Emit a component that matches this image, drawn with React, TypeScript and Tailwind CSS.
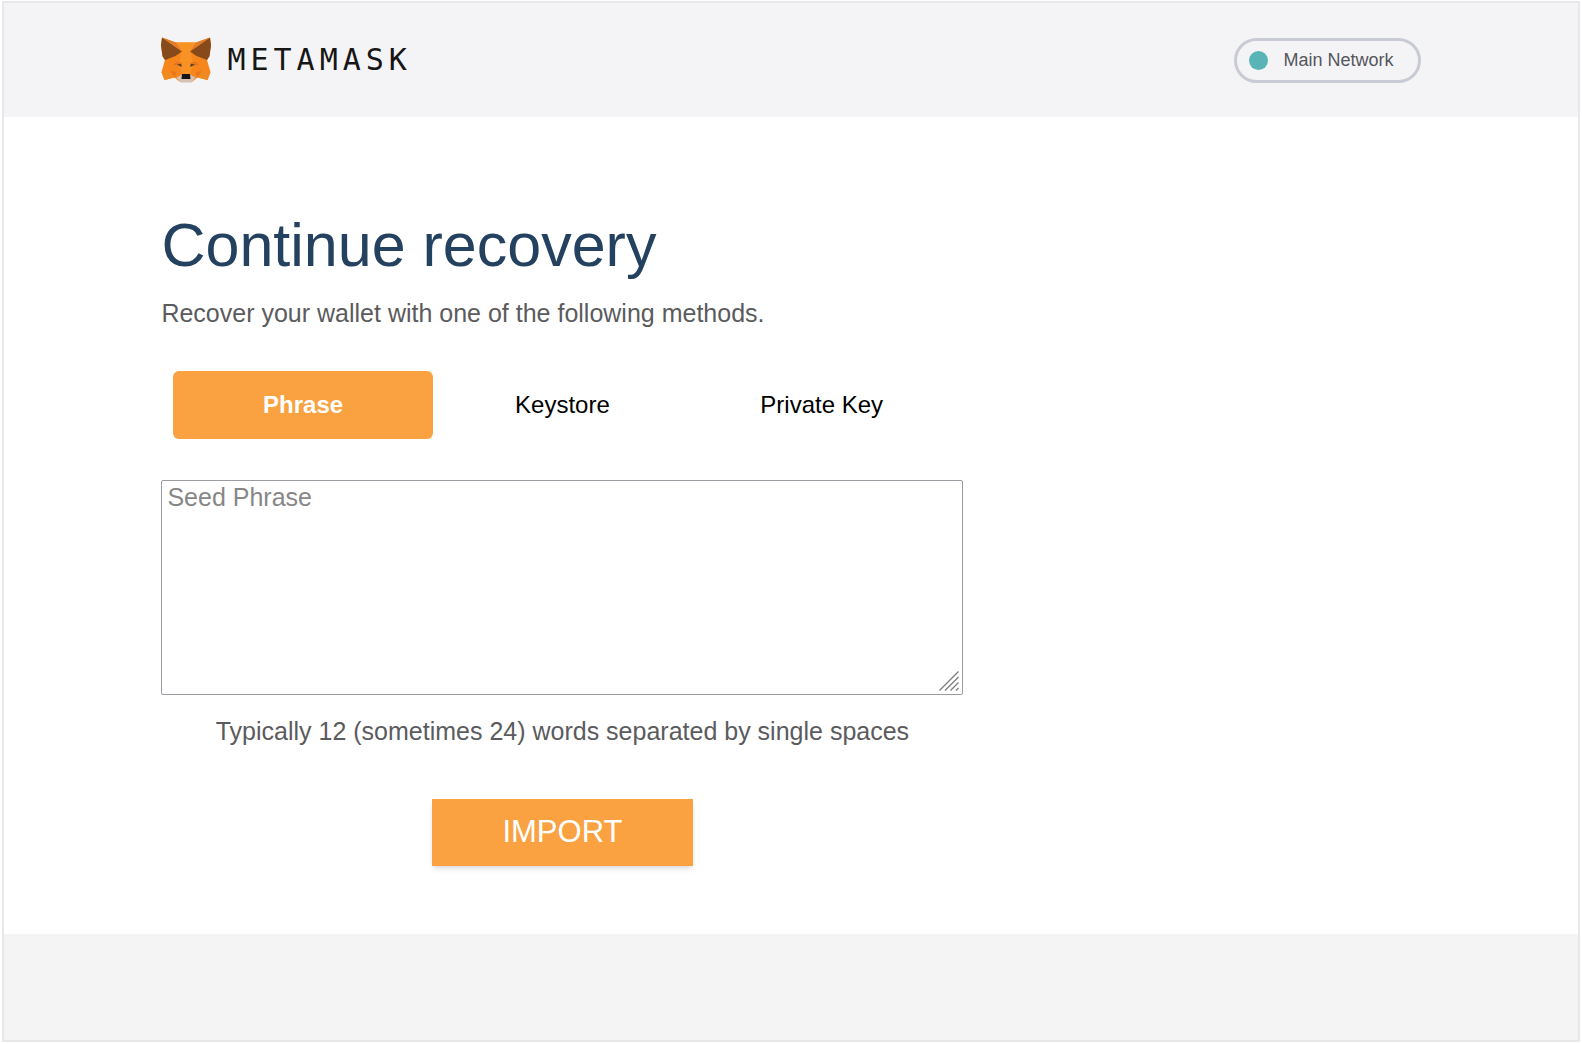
import React from "react";

const tabs = ["Phrase", "Keystore", "Private Key"];

const FoxLogo: React.FC = () => (
  <svg viewBox="0 0 50 46" className="w-[50px] h-[46px]" aria-hidden="true">
    {/* Head */}
    <path d="M15 5.5h20L49 .5l1 8-1.5 11L46 23l3.5 12-3 8-10-2.5-5 4h-13l-5-4-10 2.5-3-8L4 23 1.5 19.5 0 8.5l1-8z" fill="#f6851b" />
    <path d="M15 5.5h20l-5 9 2 14-3 9h-8l-3-9 2-14z" fill="#f89224" />
    {/* Ears */}
    <path d="M1 .5l20 14-6.5 4.5L4 23l-2.5-4L0 8.5z" fill="#874a1b" />
    <path d="M49 .5l-20 14 6.5 4.5L46 23l2.5-4L50 8.5z" fill="#874a1b" />
    <path d="M1 .5l14 5 6 9z" fill="#e07c2c" />
    <path d="M49 .5l-14 5-6 9z" fill="#e07c2c" />
    {/* Eyes */}
    <path d="M12 28l4-3.5 5 1.5v3z" fill="#e4761b" />
    <path d="M38 28l-4-3.5-5 1.5v3z" fill="#e4761b" />
    <path d="M16 27.5l4-.5.8 3z" fill="#4a3d30" />
    <path d="M34 27.5l-4-.5-.8 3z" fill="#4a3d30" />
    {/* Cheeks */}
    <path d="M9.5 34l6 1-2 5.5z" fill="#e4761b" />
    <path d="M40.5 34l-6 1 2 5.5z" fill="#e4761b" />
    <path d="M.5 35h9l4 5.5L3.500 43z" fill="#f08a20" />
    <path d="M49.5 35h-9l-4 5.5 10 2.500z" fill="#f08a20" />
    {/* Muzzle */}
    <path d="M15.5 40.5l5.500-3h8l5.500 3-4 5h-11z" fill="#d7c1b3" />
    <path d="M21 37h8l.5 5h-9z" fill="#161616" />
  </svg>
);

const Header: React.FC = () => (
  <header className="bg-[#f4f4f7] py-[34px]">
    <div className="w-4/5 mx-auto flex items-center justify-between">
      <a href="#" className="flex items-center gap-4">
        <FoxLogo />
        <span className="font-['DejaVu_Sans_Mono',monospace] text-[30px] leading-10 tracking-[5px] text-[#161616]">
          METAMASK
        </span>
      </a>
      <button
        type="button"
        className="flex items-center gap-4 h-[45px] pl-3 pr-6 rounded-full border-[3px] border-[#c8cbd3] text-lg text-[#55565b]">
        <span className="size-[19px] rounded-full bg-[#5ab4b6]" />
        Main Network
      </button>
    </div>
  </header>
);

const RecoveryForm: React.FC = () => (
  <div className="w-[802px] max-w-full">
    {/* Method tabs */}
    <div role="tablist" className="mt-[42px] px-3 flex">
      {tabs.map((tab, index) => (
        <button
          key={tab}
          type="button"
          role="tab"
          aria-selected={index === 0}
          className={
            index === 0
              ? "flex-1 h-[68px] rounded-md bg-[#faa241] text-2xl font-bold text-white"
              : "flex-1 h-[68px] rounded-md text-2xl text-black"
          }>
          {tab}
        </button>
      ))}
    </div>

    <div className="relative mt-[41px]">
      <textarea
        readOnly
        aria-label="Seed Phrase"
        placeholder="Seed Phrase"
        className="block w-full h-[215px] px-[5px] resize-none rounded-xs border border-[#9b9ba1] bg-white text-[25px] leading-8 placeholder:text-[#878787]"
      />
      {/* Resize grip */}
      <svg
        viewBox="0 0 20 20"
        className="absolute right-1 bottom-1 size-5 pointer-events-none"
        aria-hidden="true">
        <path d="M.5 19.5l19-19M6 19.5l13.500-13.500M11.500 19.5l8-8M17 19.5l2.500-2.500" stroke="#808080" strokeWidth="1.4" />
      </svg>
    </div>
    <p className="mt-5 text-center text-[25px] leading-8 text-[#5b5b5e]">
      Typically 12 (sometimes 24) words separated by single spaces
    </p>
    <button
      type="button"
      className="block mx-auto mt-13 w-[261px] h-[67px] bg-[#faa241] text-[31px] text-white shadow-md">
      IMPORT
    </button>
  </div>
);

const App: React.FC = () => {
  return (
    <div className="min-h-screen bg-white px-0.5 pt-px pb-0.5 flex flex-col font-['Liberation_Sans',sans-serif]">
      <div className="flex-1 flex flex-col border-2 border-[#e8e8eb] bg-[#f4f4f4]">
        <Header />
        <main className="bg-white pt-24 pb-17">
          <div className="w-4/5 mx-auto">
            <h1 className="text-[61px] leading-16 text-[#24425f]">
              Continue recovery
            </h1>
            <p className="mt-5 text-[25px] leading-8 text-[#5b5b5e]">
              Recover your wallet with one of the following methods.
            </p>
            <RecoveryForm />
          </div>
        </main>
      </div>
    </div>
  );
};

export default App;
